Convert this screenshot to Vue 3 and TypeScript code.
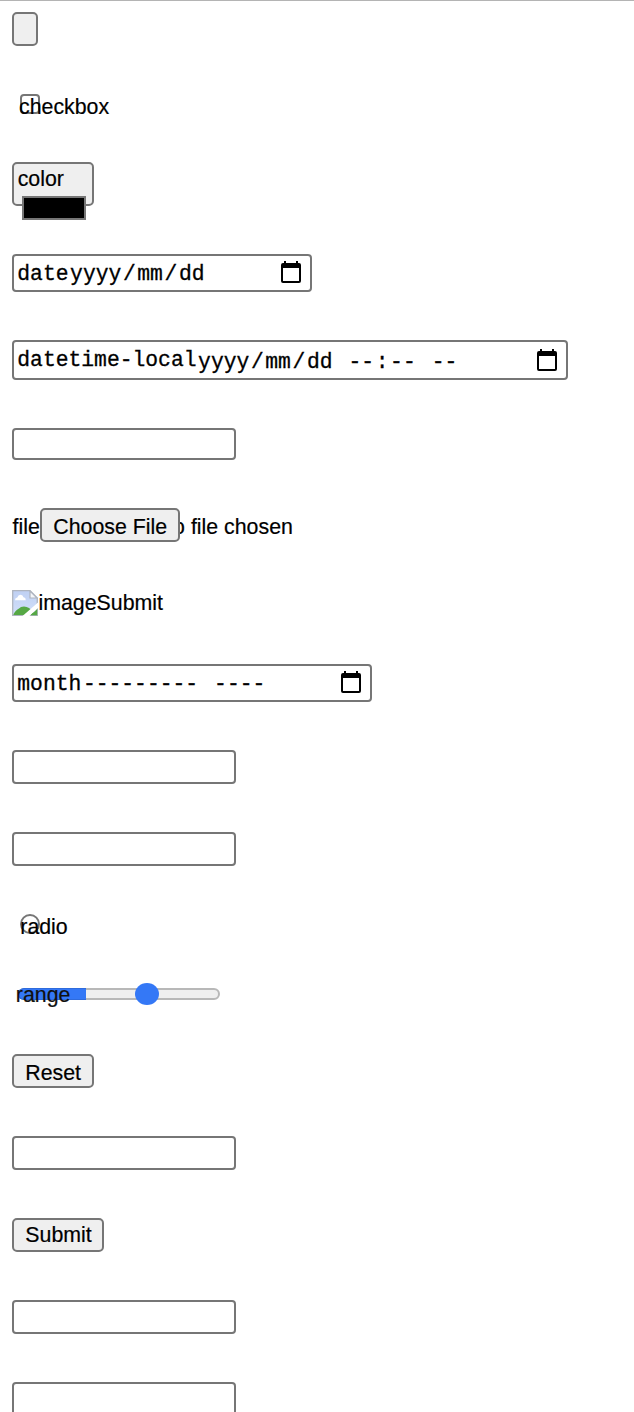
<script setup lang="ts">
interface Row {
  kind: string
  label?: string
  fields?: string[]
}

const rows: Row[] = [
  { kind: 'button' },
  { kind: 'checkbox', label: 'checkbox' },
  { kind: 'color', label: 'color' },
  { kind: 'date', label: 'date', fields: ['yyyy', '/', 'mm', '/', 'dd'] },
  {
    kind: 'datetime',
    label: 'datetime-local',
    fields: ['yyyy', '/', 'mm', '/', 'dd', ' ', '--', ':', '--', ' ', '--'],
  },
  { kind: 'text' },
  { kind: 'file', label: 'file' },
  { kind: 'image', label: 'imageSubmit' },
  { kind: 'month', label: 'month', fields: ['---------', ' ', '----'] },
  { kind: 'text' },
  { kind: 'text' },
  { kind: 'radio', label: 'radio' },
  { kind: 'range', label: 'range' },
  { kind: 'button', label: 'Reset' },
  { kind: 'text' },
  { kind: 'button', label: 'Submit' },
  { kind: 'text' },
  { kind: 'text' },
]

const isSeparator = (part: string): boolean => part === '/' || part === ' ' || part === ':'
</script>

<template>
  <main class="page">
    <div v-for="(row, i) in rows" :key="i" class="row">
      <div v-if="row.kind === 'button'" class="btn" :class="(row.label ?? 'empty').toLowerCase()">{{ row.label }}</div>

      <div v-else-if="row.kind === 'text'" class="box" :class="{ short: i === 5 }"></div>

      <div v-else-if="row.kind === 'checkbox' || row.kind === 'radio'" class="toggle" :class="row.kind">
        <span class="mark"></span>
        <span class="over">{{ row.label }}</span>
      </div>

      <div v-else-if="row.kind === 'color'" class="color">
        <span>{{ row.label }}</span>
        <span class="swatch"></span>
      </div>

      <div v-else-if="row.fields" class="box temporal" :class="row.kind">
        <span class="name">{{ row.label }}</span>
        <span class="fields"><span v-for="(part, j) in row.fields" :key="j" :class="{ field: !isSeparator(part) }">{{ part }}</span></span>
        <svg class="calendar" width="20" height="22" viewBox="0 0 20 22">
          <path
            fill-rule="evenodd"
            d="M3 0h2v2h10V0h2v2h1a2 2 0 0 1 2 2v16a2 2 0 0 1-2 2H2a2 2 0 0 1-2-2V4a2 2 0 0 1 2-2h1zM2 7v13h16V7z"
          />
        </svg>
      </div>

      <div v-else-if="row.kind === 'file'" class="file">
        <span class="file-name">{{ row.label }}</span>
        <span class="btn choose">Choose File</span>
        <span class="status">No file chosen</span>
      </div>

      <div v-else-if="row.kind === 'image'" class="image">
        <svg width="26" height="26" viewBox="0 0 26 26">
          <defs>
            <linearGradient id="sky" x1="0" y1="0" x2="0" y2="1">
              <stop offset="0" stop-color="#bfd0f3" />
              <stop offset="1" stop-color="#d2e0fa" />
            </linearGradient>
          </defs>
          <path d="M.7.7H18l7.3 7.3v17.3H.7z" fill="url(#sky)" stroke="#aeb4bf" stroke-width="1.3" />
          <path d="M3 10.200q0-2.500 2.300-2.700.7-2.700 3.300-2.700 2.300 0 2.900 2.500 2.300.2 2.300 2.900z" fill="#fff" />
          <path d="M1.300 25q1.500-4.500 5.700-6.500 1.500-2 5-2 5.500.3 9 5.500l2 3z" fill="#56a845" />
          <path d="M10.500 26L26 12.500v5.500L17.500 26z" fill="#fff" />
          <path d="M18.500 25.200l6.700-6.200v6.200z" fill="#56a845" />
          <path d="M18 1v7h7z" fill="#f4f6fa" stroke="#aeb4bf" stroke-width="1.200" />
        </svg>
        <span class="alt">{{ row.label }}</span>
      </div>

      <div v-else class="range">
        <span class="track"><span class="filled"></span></span>
        <span class="thumb"></span>
        <span class="over">{{ row.label }}</span>
      </div>
    </div>
  </main>
</template>

<style>
body {
  margin: 0;
  background: #fff;
}
</style>

<style scoped>
.page {
  box-sizing: border-box;
  width: 634px;
  height: 1412px;
  overflow: hidden;
  padding: 11px 12px 0;
  border-top: 1px solid #b4b4b4;
  background: #fff;
  color: #000;
  font: 21.333px/24px "Liberation Sans", Arial, sans-serif;
  -webkit-text-stroke: 0.2px currentColor;
  display: grid;
  grid-template-rows: 82px 68px 92px 86px 88px 80px 82px 74px 86px 82px 82px 69px 71px 82px 82px 82px 82px 34px;
}
.row,
.row div {
  box-sizing: border-box;
}
.row span {
  box-sizing: border-box;
  white-space: pre;
}
.row {
  display: flex;
  align-items: flex-start;
}
.btn {
  height: 34px;
  border: 2px solid #767676;
  border-radius: 5px;
  background: #efefef;
  padding: 5px 0 0 11.3px;
}
.btn.empty {
  width: 26px;
  padding: 0;
}
.btn.reset {
  width: 82px;
}
.btn.submit {
  width: 92px;
  padding-top: 3px;
}
.box {
  width: 224px;
  height: 34px;
  border: 2px solid #767676;
  border-radius: 4px;
}
.box.short {
  height: 32px;
}
.toggle {
  position: relative;
  margin-left: 8px;
}
.mark {
  display: block;
  width: 20px;
  height: 20px;
  border: 2px solid #767676;
  border-radius: 4px;
}
.radio .mark {
  border-radius: 50%;
}
.over {
  position: absolute;
  left: -1px;
  top: 1px;
}
.radio .over {
  left: 0.3px;
}
.color {
  position: relative;
  width: 82px;
  height: 44px;
  border: 2px solid #767676;
  border-radius: 5px;
  background: #efefef;
  padding: 3px 0 0 3.7px;
}
.swatch {
  position: absolute;
  left: 8px;
  top: 32px;
  width: 64px;
  height: 24px;
  border: 2px solid #767676;
  background: #000;
}
.temporal {
  display: flex;
  align-items: flex-start;
  height: 38px;
  padding: 5px 9px 0 3.3px;
  font-family: "Liberation Mono", "Courier New", monospace;
  -webkit-text-stroke: 0.3px currentColor;
}
.date {
  width: 300px;
}
.date .name,
.date .fields,
.month .name,
.month .fields {
  margin-top: 1px;
}
.datetime {
  width: 556px;
  height: 40px;
  padding-top: 6px;
}
.datetime .fields {
  margin-top: 2px;
}
.month {
  width: 360px;
}
.field {
  padding: 0 1.6px;
}
.calendar {
  display: block;
  margin-left: auto;
}
.datetime .calendar {
  margin-top: 1px;
}
.file {
  display: flex;
  align-items: flex-start;
}
.file-name {
  width: 28px;
  padding: 7px 0 0 0.6px;
}
.choose {
  position: relative;
  z-index: 1;
  width: 140px;
}
.status {
  margin-left: -22.3px;
  padding-top: 7px;
}
.image {
  display: flex;
}
.image svg {
  display: block;
}
.alt {
  padding: 1px 0 0 0.5px;
}
.range {
  position: relative;
  width: 202px;
  height: 22px;
  margin-left: 6px;
  padding-top: 5px;
}
.track {
  display: block;
  height: 12px;
  border: 2px solid #b8b8b8;
  border-radius: 6px;
  background: #efefef;
}
.filled {
  display: block;
  width: 68px;
  height: 12px;
  margin: -2px 0 0 -2px;
  border: 1px solid #2f6bdc;
  border-right: 0;
  border-radius: 6px 0 0 6px;
  background: #3478f6;
}
.thumb {
  position: absolute;
  left: 117px;
  top: 0;
  width: 24px;
  height: 22px;
  border-radius: 50%;
  background: #3478f6;
}
.range .over {
  left: -2.2px;
  top: 0;
  color: #101010;
}
</style>
